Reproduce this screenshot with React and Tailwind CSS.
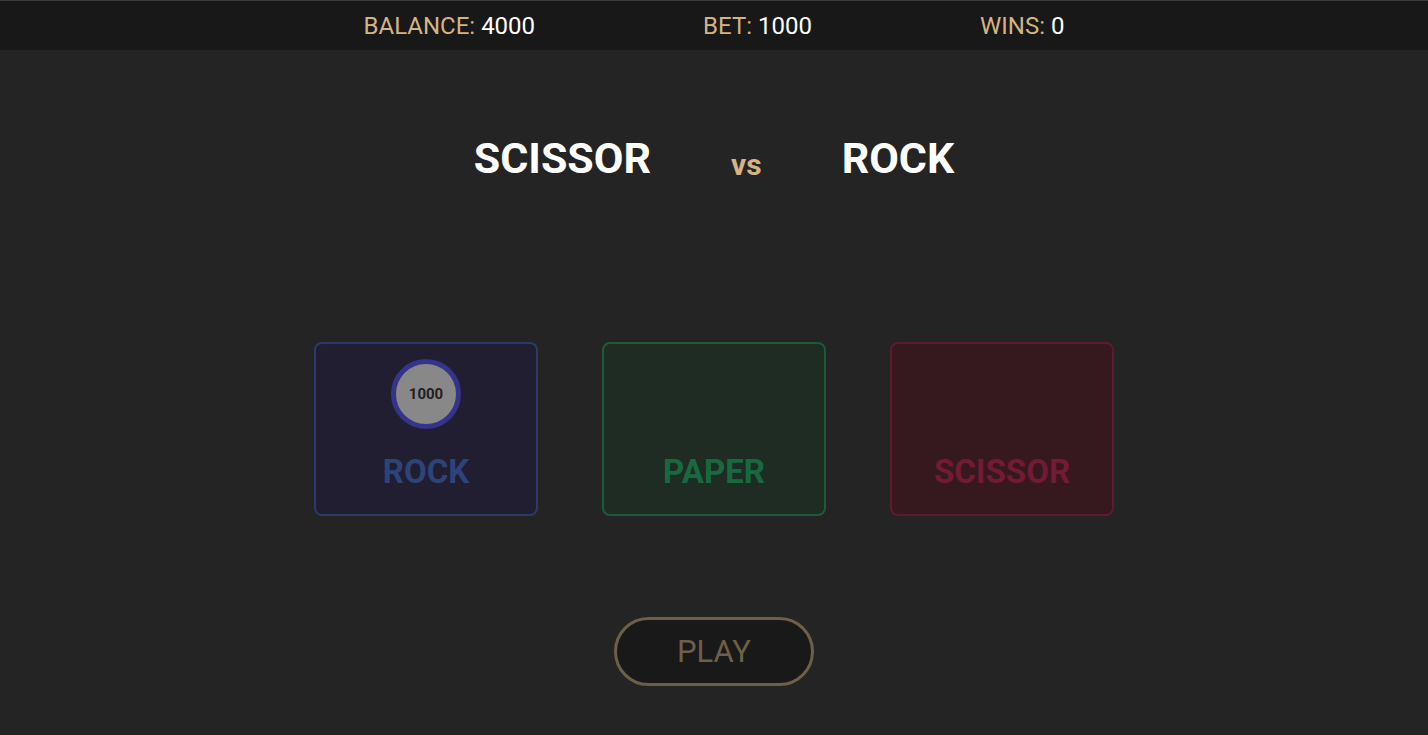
import React from "react";

const cards = [
  {
    name: "ROCK",
    box: "bg-[#221e32] border-[#2c3a6a]",
    text: "text-[#2c4478]",
    bet: 1000,
  },
  {
    name: "PAPER",
    box: "bg-[#1f2c24] border-[#1d5a38]",
    text: "text-[#176a40]",
  },
  {
    name: "SCISSOR",
    box: "bg-[#36181f] border-[#5f1a2f]",
    text: "text-[#731a35]",
  },
];

const Stat = ({ label, value }) => (
  <div className="text-[24px] leading-none">
    <span className="text-[#d4b483]">{label}: </span>
    <span className="text-white">{value}</span>
  </div>
);

export default function App() {
  return (
    <div
      className="min-h-screen w-full bg-[#242424] flex flex-col items-center"
      style={{ fontFamily: "Roboto, 'Liberation Sans', sans-serif" }}
    >
      {/* top bar */}
      <header className="w-full h-[50px] bg-[#181818] border-t border-[#3c3c3c] flex items-center justify-center gap-[168px]">
        <Stat label="BALANCE" value={4000} />
        <Stat label="BET" value={1000} />
        <Stat label="WINS" value={0} />
      </header>

      {/* result */}
      <div className="mt-[87px] flex items-baseline gap-[80px] leading-none">
        <span className="text-[43px] font-bold text-white">SCISSOR</span>
        <span className="text-[30px] font-bold text-[#d4b483] relative top-[2px]">vs</span>
        <span className="text-[43px] font-bold text-white">ROCK</span>
      </div>

      {/* choices */}
      <div className="mt-[162px] flex gap-[64px]">
        {cards.map((c) => (
          <div
            key={c.name}
            className={`w-[224px] h-[174px] rounded-[8px] border-2 flex flex-col items-center pt-[15px] ${c.box}`}
          >
            <div className="h-[70px] flex items-center justify-center">
              {c.bet && (
                <div className="w-[70px] h-[70px] rounded-full border-[5px] border-[#34348a] bg-[#888888] flex items-center justify-center text-[15px] font-bold text-[#1f1f1f]">
                  {c.bet}
                </div>
              )}
            </div>
            <div className={`mt-[26px] text-[33px] font-bold leading-none ${c.text}`}>
              {c.name}
            </div>
          </div>
        ))}
      </div>

      <button className="mt-[101px] w-[200px] h-[69px] rounded-full border-[3px] border-[#6e5f48] bg-[#191919] text-[31px] text-[#6e5f48] leading-none">
        PLAY
      </button>
    </div>
  );
}
